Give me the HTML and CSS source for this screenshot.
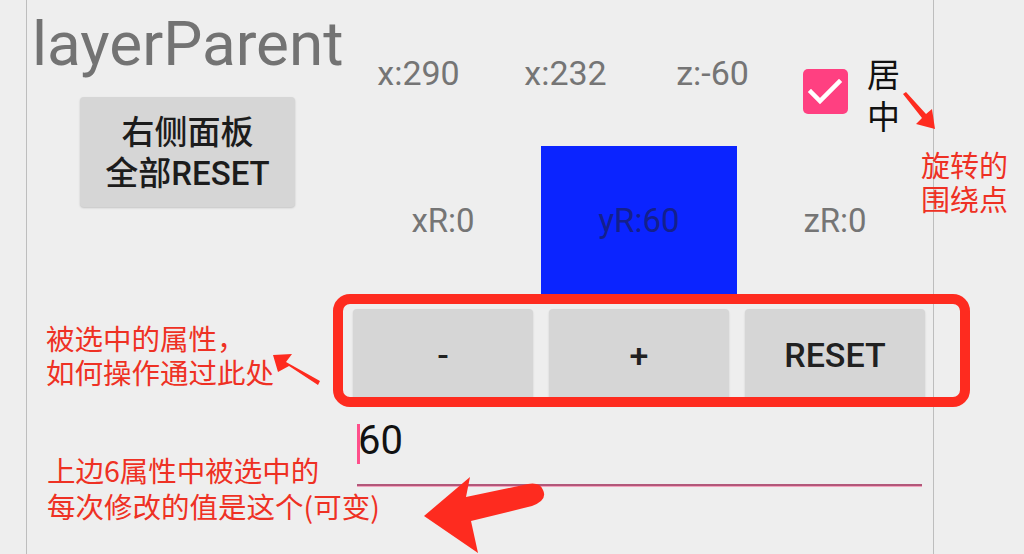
FILE: index.html
```html
<!DOCTYPE html>
<html lang="zh">
<head>
<meta charset="utf-8">
<link rel="stylesheet" href="styles.css">
</head>
<body>
<div class="page">
  <div class="gutter"></div>
  <div class="panel">
    <div class="left">
      <div class="title">layerParent</div>
      <div class="reset-all">右侧面板<br>全部RESET</div>
    </div>
    <div class="right">
      <div class="coords">
        <div class="coord">x:290</div>
        <div class="coord">x:232</div>
        <div class="coord">z:-60</div>
        <div class="center-opt">
          <span class="checkbox">
            <svg width="45" height="45" viewBox="0 0 45 45"><polyline points="8,23 17,32 36,13" fill="none" stroke="#fff" stroke-width="4.5" stroke-linecap="square"/></svg>
          </span>
          <span class="center-label">居<br>中</span>
        </div>
      </div>
      <div class="rotations">
        <div class="rot">xR:0</div>
        <div class="rot selected">yR:60</div>
        <div class="rot">zR:0</div>
      </div>
      <div class="ops">
        <div class="op">-</div>
        <div class="op">+</div>
        <div class="op">RESET</div>
      </div>
      <div class="value-input"><span class="caret"></span>60</div>
    </div>
  </div>
</div>

<div class="note note-pivot">旋转的<br>围绕点</div>
<div class="note note-ops">被选中的属性，<br>如何操作通过此处</div>
<div class="note note-value">上边6属性中被选中的<br>每次修改的值是这个(可变)</div>

<svg class="overlay" width="1024" height="554" viewBox="0 0 1024 554">
  <rect x="338" y="299" width="627" height="103" rx="12" ry="12" fill="none" stroke="#fe2b1f" stroke-width="10"/>
  <polygon points="903,94 906,92 926,114 932,109 935,129 916,124 922,118" fill="#fe2b1f"/>
  <polygon points="320,381 318,385 289,366 278,372 273,355 292,354 286,362" fill="#fe2b1f"/>
  <path d="M470,477 L424,516 L478,553 L471,521 L532,506 Q548,500 543,490 Q540,482 528,484 L466,497 Z" fill="#fe2b1f"/>
</svg>
</body>
</html>
```
FILE: styles.css
```css
html, body {
  margin: 0;
  padding: 0;
}
body {
  background: #eeeeee;
  font-family: Roboto, "Noto Sans CJK SC", sans-serif;
  width: 1024px;
  height: 554px;
  overflow: hidden;
  position: relative;
}
.page {
  display: flex;
  height: 554px;
}
.gutter {
  width: 26px;
}
.panel {
  width: 906px;
  border-left: 1px solid #bdbdbd;
  border-right: 1px solid #bdbdbd;
  display: flex;
}
.left {
  width: 318px;
  padding-left: 5px;
  box-sizing: border-box;
}
.title {
  margin-top: 7px;
  font-size: 62px;
  line-height: 74px;
  color: #737373;
  white-space: nowrap;
}
.reset-all {
  margin-top: 16px;
  margin-left: 48px;
  width: 215px;
  height: 110px;
  box-sizing: border-box;
  padding-top: 2px;
  background: #d6d6d6;
  border-radius: 4px;
  box-shadow: 0 1px 2px rgba(0,0,0,0.18);
  display: flex;
  align-items: center;
  justify-content: center;
  text-align: center;
  font-family: Roboto, "Noto Sans CJK SC", sans-serif;
  font-weight: 500;
  font-size: 33px;
  line-height: 41px;
  color: #1c1c1c;
}
.right {
  flex: 1;
  display: flex;
  flex-direction: column;
}
.coords {
  height: 146px;
  display: grid;
  grid-template-columns: repeat(4, 1fr);
  align-items: center;
}
.coord {
  text-align: center;
  font-size: 34px;
  color: #757575;
}
.center-opt {
  align-self: start;
  margin-top: 52px;
  margin-left: 17px;
  display: flex;
  align-items: center;
  gap: 19px;
}
.checkbox {
  width: 45px;
  height: 45px;
  background: #ff4081;
  border-radius: 5px;
  display: block;
  margin-top: -6px;
}
.checkbox svg {
  display: block;
}
.center-label {
  font-family: "Noto Sans CJK SC", sans-serif;
  font-size: 33px;
  line-height: 42px;
  color: #111111;
}
.rotations {
  height: 149px;
  display: grid;
  grid-template-columns: repeat(3, 1fr);
}
.rot {
  display: flex;
  align-items: center;
  justify-content: center;
  font-size: 33px;
  color: #757575;
}
.rot.selected {
  background: #0b24ff;
  color: #14208c;
}
.ops {
  display: grid;
  grid-template-columns: repeat(3, 1fr);
  padding: 14px 0 6px;
}
.op {
  margin: 0 8px;
  height: 92px;
  background: #d6d6d6;
  border-radius: 4px;
  box-shadow: 0 1px 2px rgba(0,0,0,0.15);
  display: flex;
  align-items: center;
  justify-content: center;
  font-weight: 500;
  font-size: 34px;
  color: #212121;
}
.value-input {
  margin-top: 10px;
  margin-left: 12px;
  width: 565px;
  font-size: 40px;
  line-height: 48px;
  color: #111111;
  padding-bottom: 19px;
  border-bottom: 2px solid #b25779;
  box-shadow: 0 1px 0 #f2a3be;
}
.caret {
  display: inline-block;
  width: 3px;
  height: 40px;
  background: #ff4f8b;
  vertical-align: -10px;
  margin-right: -2px;
}
.note {
  position: absolute;
  font-family: "Noto Sans CJK SC", sans-serif;
  color: #ee3124;
  white-space: nowrap;
}
.note-pivot {
  left: 921px;
  top: 147px;
  font-size: 29px;
  line-height: 34px;
}
.note-ops {
  left: 46px;
  top: 321px;
  font-size: 28.5px;
  line-height: 34px;
}
.note-value {
  left: 47px;
  top: 452px;
  font-size: 28.5px;
  line-height: 36px;
}
.overlay {
  position: absolute;
  left: 0;
  top: 0;
  pointer-events: none;
}
```
